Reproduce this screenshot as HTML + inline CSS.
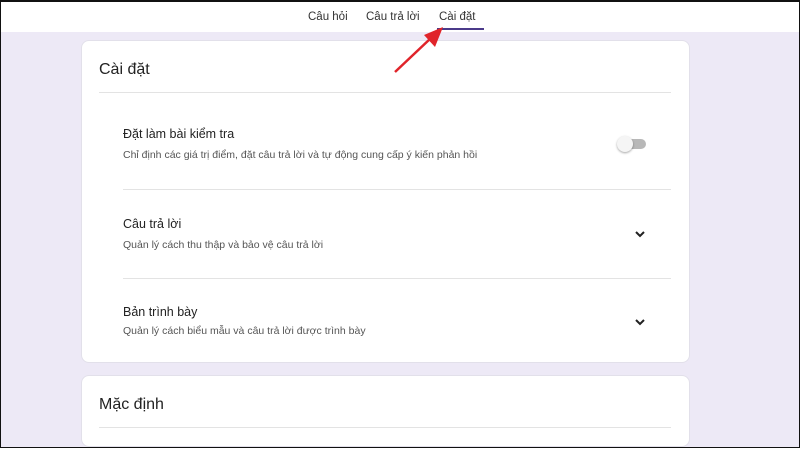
<!DOCTYPE html>
<html><head><meta charset="utf-8"><style>
*{margin:0;padding:0;box-sizing:border-box}
html,body{width:800px;height:450px;overflow:hidden}
body{background:#fff;font-family:"Liberation Sans",sans-serif;position:relative}
.frame{position:absolute;left:0;top:0;width:800px;height:448px;border:1.5px solid #111;border-top:2px solid #111;overflow:hidden;background:#ede9f6}
.top{position:absolute;left:0;top:0;width:100%;height:30px;background:#fff}
.tab{position:absolute;top:9px;font-size:11.5px;color:#333}
.ul{position:absolute;left:436px;top:26px;width:47px;height:2px;background:#4b3a8a}
.card{position:absolute;left:80px;width:609px;background:#fff;border-radius:8px;border:1px solid #e2e0ea}
.h{position:absolute;left:17px;font-size:16px;color:#222}
.hr{position:absolute;height:1px;background:#e3e3e3}
.t{position:absolute;left:41px;font-size:12.5px;color:#222}
.s{position:absolute;left:41px;font-size:10.5px;color:#555}
.chev{position:absolute;left:552px}
</style></head><body>
<div class="frame">
<div class="top">
<div class="tab" style="left:307px">Câu hỏi</div>
<div class="tab" style="left:365px">Câu trả lời</div>
<div class="tab" style="left:438px">Cài đặt</div>
<div class="ul"></div>
</div>
<div class="card" style="top:38px;height:323px">
<div class="h" style="top:20px">Cài đặt</div>
<div class="hr" style="left:17px;width:572px;top:51px"></div>
<div class="t" style="top:86px">Đặt làm bài kiểm tra</div>
<div class="s" style="top:108px">Chỉ định các giá trị điểm, đặt câu trả lời và tự động cung cấp ý kiến phản hồi</div>
<div style="position:absolute;left:540px;top:98px;width:24px;height:10px;border-radius:5px;background:#b8b8b8"></div>
<div style="position:absolute;left:535px;top:95px;width:16px;height:16px;border-radius:50%;background:#f5f5f5;box-shadow:0 1px 2px rgba(0,0,0,.35)"></div>
<div class="hr" style="left:41px;width:548px;top:148px"></div>
<div class="t" style="top:176px">Câu trả lời</div>
<div class="s" style="top:198px">Quản lý cách thu thập và bảo vệ câu trả lời</div>
<svg class="chev" style="top:188px" width="12" height="10" viewBox="0 0 12 10"><path d="M2 3l4 4 4-4" stroke="#222" stroke-width="2" fill="none"/></svg>
<div class="hr" style="left:41px;width:548px;top:237px"></div>
<div class="t" style="top:264px">Bản trình bày</div>
<div class="s" style="top:284px">Quản lý cách biểu mẫu và câu trả lời được trình bày</div>
<svg class="chev" style="top:276px" width="12" height="10" viewBox="0 0 12 10"><path d="M2 3l4 4 4-4" stroke="#222" stroke-width="2" fill="none"/></svg>
</div>
<div class="card" style="top:373px;height:72px">
<div class="h" style="top:20px">Mặc định</div>
<div class="hr" style="left:17px;width:572px;top:51px"></div>
</div>
<svg style="position:absolute;left:390px;top:20px" width="60" height="55" viewBox="0 0 60 55"><path d="M4 50L40 16" stroke="#e0242a" stroke-width="2.5"/><path d="M52 5L33 13L44 25Z" fill="#e0242a"/></svg>
</div>
</body></html>
